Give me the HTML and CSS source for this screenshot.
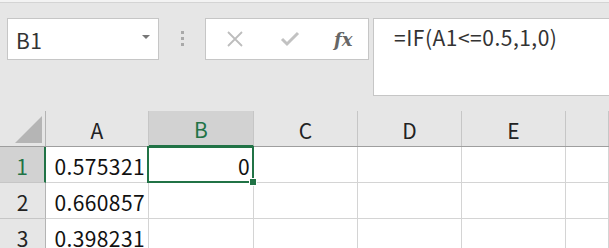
FILE: index.html
```html
<!DOCTYPE html>
<html lang="ja">
<head>
    <meta charset="UTF-8">
    <title>Book1 - Excel</title>
    <link rel="stylesheet" href="styles.css">
</head>
<body>
    <div class="top-strip"></div>

    <div class="formula-row">
        <div class="name-box">
            <span class="name-value">B1</span>
            <span class="name-arrow"></span>
        </div>

        <div class="grip">
            <span></span><span></span><span></span>
        </div>

        <div class="fx-buttons">
            <svg class="btn-icon" width="18" height="18" viewBox="0 0 18 18">
                <path d="M2 2 L16 16 M16 2 L2 16" stroke="#bdbdbd" stroke-width="1.8" fill="none"/>
            </svg>
            <svg class="btn-icon" width="20" height="18" viewBox="0 0 20 18">
                <path d="M2 9 L7 14 L18 3" stroke="#c2c2c2" stroke-width="3" fill="none"/>
            </svg>
            <span class="fx">fx</span>
        </div>

        <div class="formula-box">=IF(A1&lt;=0.5,1,0)</div>
    </div>

    <div class="sheet">
        <div class="head-row">
            <div class="corner"><span class="corner-tri"></span></div>
            <div class="col-head w-a">A</div>
            <div class="col-head w-b active">B</div>
            <div class="col-head w-c">C</div>
            <div class="col-head w-c">D</div>
            <div class="col-head w-c">E</div>
            <div class="col-head w-rest"></div>
        </div>

        <div class="row">
            <div class="row-head active">1</div>
            <div class="cell w-a">0.575321</div>
            <div class="cell w-b">0</div>
            <div class="cell w-c"></div>
            <div class="cell w-c"></div>
            <div class="cell w-c"></div>
            <div class="cell w-rest"></div>
        </div>
        <div class="row">
            <div class="row-head">2</div>
            <div class="cell w-a">0.660857</div>
            <div class="cell w-b"></div>
            <div class="cell w-c"></div>
            <div class="cell w-c"></div>
            <div class="cell w-c"></div>
            <div class="cell w-rest"></div>
        </div>
        <div class="row">
            <div class="row-head">3</div>
            <div class="cell w-a">0.398231</div>
            <div class="cell w-b"></div>
            <div class="cell w-c"></div>
            <div class="cell w-c"></div>
            <div class="cell w-c"></div>
            <div class="cell w-rest"></div>
        </div>

        <div class="selection"><span class="fill-handle"></span></div>
    </div>
</body>
</html>
```

FILE: styles.css
```css
body {
    margin: 0;
    width: 609px;
    height: 248px;
    overflow: hidden;
    background: #e6e6e6;
    font-family: "Noto Sans CJK JP", "Noto Sans", sans-serif;
    color: #222222;
}

.top-strip {
    height: 2px;
    background: #f3f3f3;
    border-bottom: 1px solid #d4d4d4;
}

/* formula bar */

.formula-row {
    display: flex;
    align-items: flex-start;
    padding: 15px 0 0 7px;
    height: 108px;
    box-sizing: border-box;
}

.name-box {
    width: 152px;
    height: 42px;
    box-sizing: border-box;
    background: #ffffff;
    border: 1px solid #c6c6c6;
    display: flex;
    align-items: center;
    justify-content: space-between;
    padding: 0 8px 0 8px;
}

.name-value {
    font-size: 21px;
    letter-spacing: 0.5px;
    color: #333333;
    line-height: 1;
    margin-top: 2px;
}

.name-arrow {
    width: 0;
    height: 0;
    border-left: 4px solid transparent;
    border-right: 4px solid transparent;
    border-top: 4px solid #777777;
    margin-bottom: 4px;
}

.grip {
    width: 46px;
    display: flex;
    flex-direction: column;
    align-items: center;
    gap: 3px;
    padding-top: 13px;
}

.grip span {
    width: 3px;
    height: 3px;
    background: #a9a9a9;
}

.fx-buttons {
    width: 164px;
    height: 42px;
    box-sizing: border-box;
    background: #ffffff;
    border: 1px solid #c6c6c6;
    display: flex;
    align-items: center;
    padding-left: 20px;
    gap: 36px;
}

.btn-icon {
    display: block;
}

.fx {
    font-family: "DejaVu Serif", "Liberation Serif", serif;
    font-style: italic;
    font-weight: bold;
    font-size: 18px;
    color: #666666;
    margin-left: -2px;
}

.formula-box {
    flex: 1;
    margin-left: 4px;
    height: 78px;
    box-sizing: border-box;
    background: #ffffff;
    border: 1px solid #c6c6c6;
    border-right: none;
    padding: 3px 0 0 20px;
    font-size: 21px;
    letter-spacing: 0.5px;
    color: #333333;
}

/* grid */

.sheet {
    position: relative;
}

.head-row,
.row {
    display: flex;
}

.head-row {
    height: 36px;
    box-sizing: border-box;
    border-bottom: 1px solid #9e9e9e;
}

.row {
    height: 36px;
}

.corner {
    width: 46px;
    box-sizing: border-box;
    border-right: 1px solid #b4b4b4;
    position: relative;
}

.corner-tri {
    position: absolute;
    right: 3px;
    bottom: 3px;
    width: 0;
    height: 0;
    border-left: 27px solid transparent;
    border-bottom: 27px solid #b5b5b5;
}

.w-a { width: 103px; }
.w-b { width: 105px; }
.w-c { width: 104px; }
.w-rest { flex: 1; }

.col-head {
    box-sizing: border-box;
    border-right: 1px solid #c6c6c6;
    display: flex;
    align-items: center;
    justify-content: center;
    font-size: 21px;
    color: #222222;
    padding-top: 2px;
}

.col-head.active {
    background: #d2d2d2;
    color: #217346;
    border-bottom: 2px solid #217346;
    margin-bottom: -1px;
}

.row-head {
    width: 46px;
    box-sizing: border-box;
    border-right: 1px solid #b4b4b4;
    border-bottom: 1px solid #c6c6c6;
    display: flex;
    align-items: center;
    justify-content: center;
    font-size: 21px;
    color: #222222;
    padding-top: 2px;
}

.row-head.active {
    background: #d2d2d2;
    color: #217346;
    border-right: 2px solid #217346;
}

.cell {
    box-sizing: border-box;
    background: #ffffff;
    border-right: 1px solid #d4d4d4;
    border-bottom: 1px solid #d4d4d4;
    display: flex;
    align-items: center;
    justify-content: flex-end;
    padding: 2px 3px 0 0;
    font-size: 21px;
    letter-spacing: 0.4px;
    color: #111111;
}

.selection {
    position: absolute;
    left: 147px;
    top: 35px;
    width: 107px;
    height: 37px;
    box-sizing: border-box;
    border: 2px solid #217346;
}

.fill-handle {
    position: absolute;
    right: -5px;
    bottom: -5px;
    width: 6px;
    height: 6px;
    background: #217346;
    border: 1px solid #ffffff;
}
```
